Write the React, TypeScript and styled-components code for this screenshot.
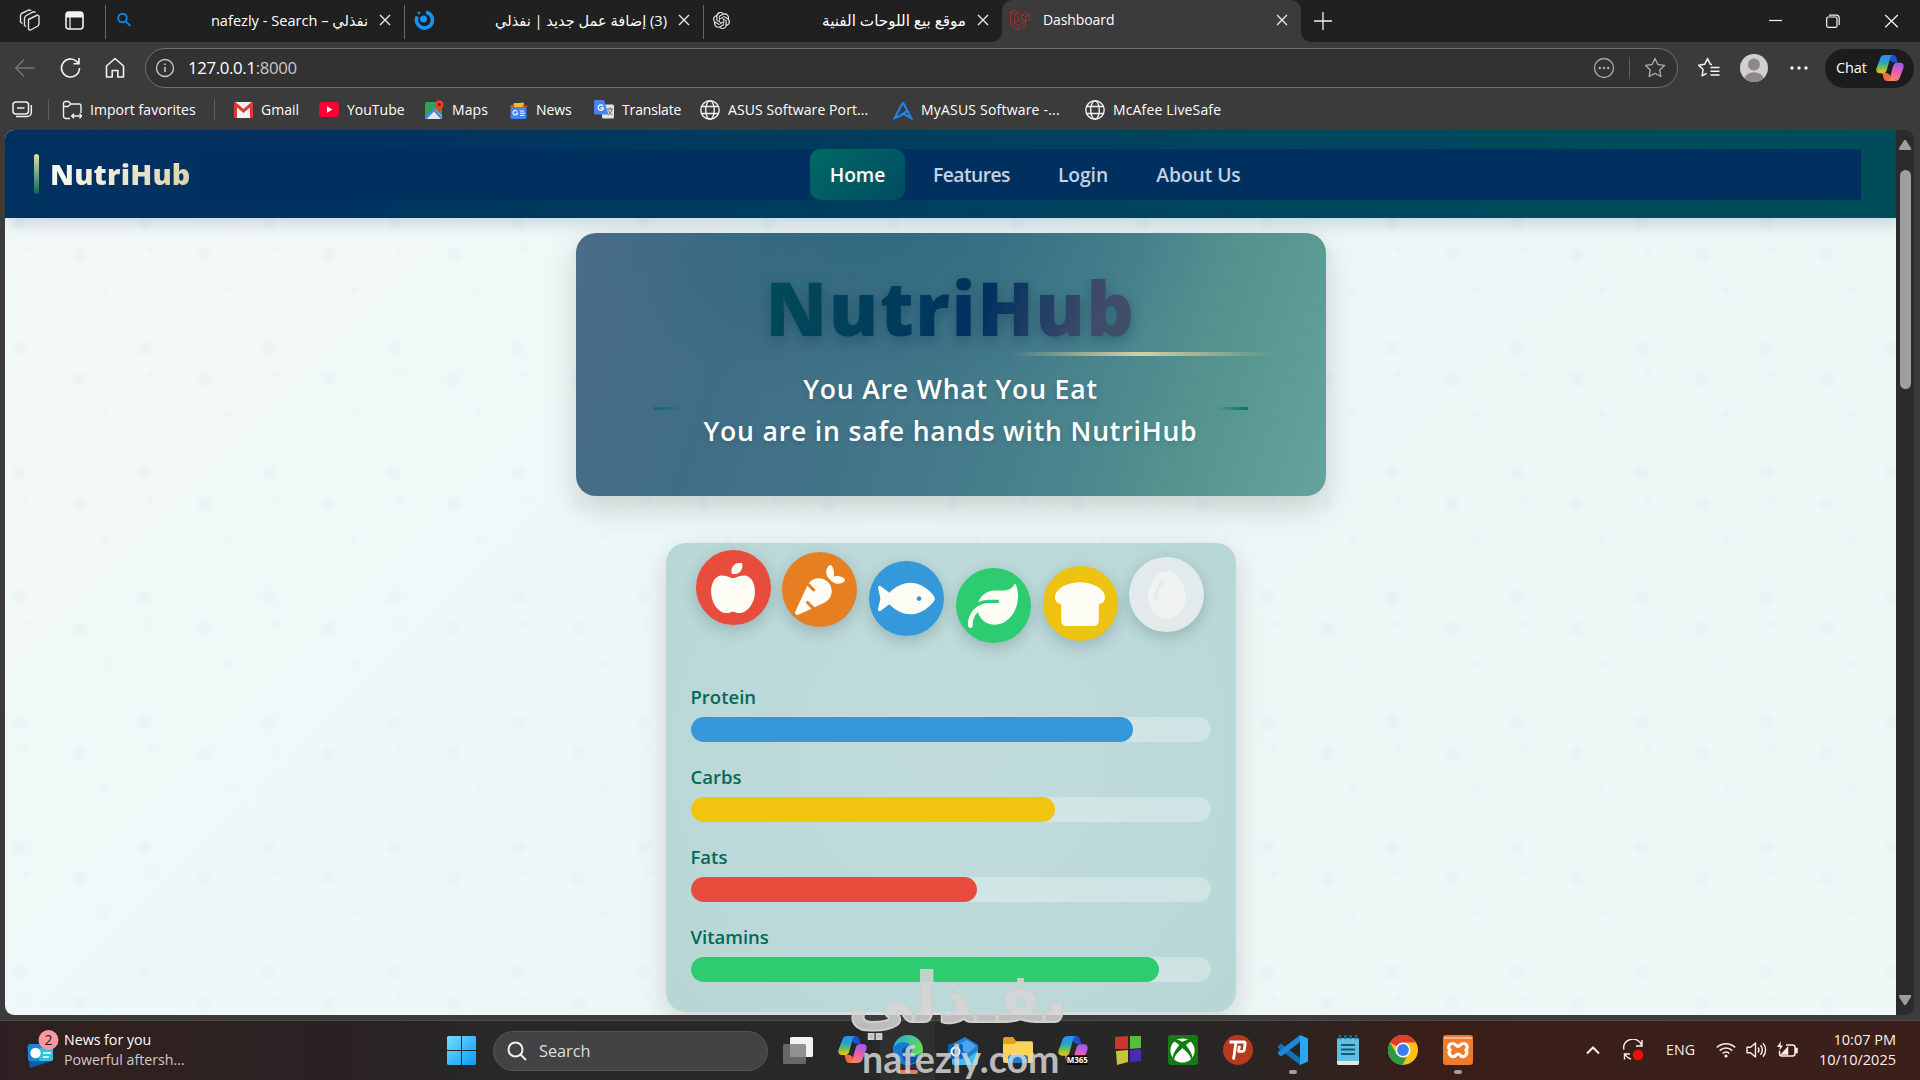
import React from 'react';
import styled, { createGlobalStyle } from 'styled-components';
import { FaAppleWhole, FaCarrot, FaLeaf, FaBreadSlice, FaEgg, FaXbox } from 'react-icons/fa6';
import { FaFish } from 'react-icons/fa';
import { SiOpenai, SiLaravel } from 'react-icons/si';

const Global = createGlobalStyle`
  * { box-sizing: border-box; }
  body { margin: 0; background: #3b3b3b; overflow: hidden; }
  svg { display: block; flex: none; }
`;

const Screen = styled.div`
  position: relative;
  width: 1920px;
  height: 1080px;
  display: flex;
  flex-direction: column;
  overflow: hidden;
  background: #3b3b3b;
  color: #fff;
  font-family: 'Open Sans', 'Noto Sans', 'DejaVu Sans', sans-serif;
  font-size: 14px;
  white-space: nowrap;
`;

/* ---------- browser: tab strip ---------- */
const TabStrip = styled.div`
  display: flex;
  height: 42px;
  flex: none;
`;
const StripLeft = styled.div`
  display: flex;
  align-items: center;
  width: 1002px;
  background: #202020;
  border-bottom-right-radius: 10px;
`;
const StripRight = styled.div`
  display: flex;
  flex: 1;
  align-items: center;
  padding: 0 21px 0 13px;
  background: #202020;
  border-bottom-left-radius: 10px;
`;
const TabActions = styled.div`
  display: flex;
  align-items: center;
  gap: 24px;
  width: 105px;
  padding: 0 0 2px 19px;
`;
const Tab = styled.div`
  display: flex;
  align-items: center;
  width: 299px;
  height: 34px;
  padding: 0 13px 4px 9px;
  border-left: 1px solid #666;
  margin-top: 2px;
`;
const ActiveWrap = styled.div`
  width: 299px;
  background: linear-gradient(#202020 50%, #3b3b3b 50%);
`;
const ActiveTab = styled.div`
  display: flex;
  align-items: center;
  height: 42px;
  padding: 0 13px 2px 8px;
  background: #3b3b3b;
  border-radius: 10px 10px 0 0;
`;
const TabTitle = styled.span<{ $left?: boolean; $ls?: number; $size?: number }>`
  flex: 1;
  margin: 0 11px 0 13px;
  text-align: ${(p) => (p.$left ? 'left' : 'right')};
  letter-spacing: ${(p) => p.$ls ?? 0}px;
  font-size: ${(p) => p.$size ?? 14}px;
  line-height: 20px;
  unicode-bidi: isolate;
`;
const WindowButtons = styled.div`
  display: flex;
  align-items: center;
  gap: 44px;
  margin-left: auto;
`;

/* ---------- browser: toolbar ---------- */
const Toolbar = styled.div`
  display: flex;
  align-items: center;
  height: 52px;
  flex: none;
  padding: 0 6px 0 14px;
`;
const NavButtons = styled.div`
  display: flex;
  gap: 23px;
  width: 131px;
`;
const AddressBar = styled.div`
  display: flex;
  align-items: center;
  width: 1533px;
  height: 40px;
  padding: 0 11px 0 9px;
  border: 1px solid #707070;
  border-radius: 20px;
  background: #323232;
`;
const Url = styled.span`
  flex: 1;
  margin-left: 13px;
  padding-bottom: 2px;
  font-size: 16.8px;
  letter-spacing: -0.35px;
  span { color: #c8c8c8; }
`;
const Divider = styled.i<{ $m: string; $h?: number }>`
  width: 1px;
  height: ${(p) => p.$h ?? 20}px;
  margin: ${(p) => p.$m};
  background: #5e5e5e;
`;
const ToolbarRight = styled.div`
  display: flex;
  flex: 1;
  align-items: center;
  justify-content: flex-end;
`;
const Chat = styled.div`
  display: flex;
  align-items: center;
  gap: 9px;
  width: 89px;
  height: 39px;
  margin-left: 17px;
  padding-left: 11px;
  border-radius: 20px;
  background: #1c1c1c;
  span { letter-spacing: -0.1px; font-size: 14.5px; padding-bottom: 2px; }
`;

/* ---------- browser: bookmarks ---------- */
const Bookmarks = styled.div`
  display: flex;
  align-items: center;
  height: 36px;
  flex: none;
  padding: 0 0 5px 12px;
`;
const Bookmark = styled.div<{ $w: number; $ls?: number }>`
  display: flex;
  align-items: center;
  gap: 8px;
  width: ${(p) => p.$w}px;
  letter-spacing: ${(p) => p.$ls ?? -0.05}px;
`;

/* ---------- page ---------- */
const Viewport = styled.div`
  display: flex;
  height: 885px;
  flex: none;
  margin: 0 6px 0 5px;
`;
const Page = styled.div`
  width: 1891px;
  overflow: hidden;
  border-radius: 9px 0 0 9px;
  background:
    radial-gradient(circle at 50% 50%, rgba(0, 90, 90, 0.022) 4px, transparent 9px) -48px 31px / 124.8px 124.8px,
    radial-gradient(circle at 50% 50%, rgba(0, 90, 90, 0.022) 4px, transparent 9px) 12px 62px / 124.8px 124.8px,
    radial-gradient(circle at 50% 50%, rgba(0, 90, 90, 0.018) 1px, transparent 5px) 37px 97px / 124.8px 124.8px,
    radial-gradient(circle at 50% 50%, rgba(0, 90, 90, 0.018) 1px, transparent 5px) -42px 57px / 124.8px 124.8px,
    linear-gradient(135deg, #f4f9f7, #eff8f8 35%, #eef6f6 65%, #f0f8f7);
`;
const Header = styled.header`
  display: flex;
  align-items: center;
  height: 88px;
  padding: 0 35px 0 29px;
  background: linear-gradient(135deg, #003060 0%, #003260 18%, #00405f 50%, #004a5c 80%, #004d5a 100%);
  box-shadow: 0 4px 18px rgba(0, 48, 96, 0.2);
`;
const Brand = styled.div`
  display: flex;
  align-items: center;
  gap: 11px;
  width: 166px;
  &::before {
    content: '';
    width: 5px;
    height: 40px;
    border-radius: 3px;
    background: linear-gradient(#e6d9ae, #5b9a85 60%, #00695c);
  }
  span {
    font-size: 28.8px;
    font-weight: 800;
    letter-spacing: 0.15px;
    line-height: 42px;
    background: linear-gradient(135deg, #fff, #d9cfa3);
    background-clip: text;
    -webkit-background-clip: text;
    color: transparent;
  }
`;
const Nav = styled.nav`
  display: flex;
  flex: 1;
  height: 51px;
  padding-left: 610px;
  background: #003060;
`;
const NavItem = styled.a<{ $w: number; $on?: boolean; $ls?: number }>`
  display: flex;
  align-items: center;
  justify-content: center;
  width: ${(p) => p.$w}px;
  height: 51px;
  border-radius: 10px;
  font-size: 19.3px;
  font-weight: 600;
  letter-spacing: ${(p) => p.$ls ?? -0.1}px;
  color: ${(p) => (p.$on ? '#fff' : '#c3d3e3')};
  background: ${(p) => (p.$on ? 'linear-gradient(135deg, #006a62, #004c62)' : 'none')};
  box-shadow: ${(p) => (p.$on ? '0 4px 12px rgba(0, 60, 90, 0.5)' : 'none')};
`;
const Main = styled.main`
  display: flex;
  flex-direction: column;
  align-items: center;
  padding-top: 15px;
`;
const Hero = styled.section`
  display: flex;
  flex-direction: column;
  align-items: center;
  width: 750px;
  height: 263px;
  padding-top: 33px;
  border-radius: 20px;
  background:
    radial-gradient(ellipse 320px 170px at 42% 0%, rgba(36, 98, 122, 0.55), transparent),
    linear-gradient(108deg, #4b6c86 0%, #406d86 22%, #437889 50%, #4a858d 68%, #58978f 85%, #64a49c 100%);
  box-shadow: 0 12px 32px rgba(0, 0, 0, 0.17);
`;
const HeroTitle = styled.h1`
  margin: 0;
  font-size: 74px;
  font-weight: 800;
  line-height: 84px;
  letter-spacing: 1.5px;
  background: linear-gradient(110deg, #004a58 5%, #00315f 58%, #3f4a69 86%, #3f5268);
  background-clip: text;
  -webkit-background-clip: text;
  color: transparent;
  filter: drop-shadow(0 4px 7px rgba(0, 40, 70, 0.35));
`;
const Underline = styled.div`
  width: 262px;
  height: 4px;
  margin: 2px 0 0 381px;
  background: linear-gradient(90deg, transparent, #d9cfa0 50%, transparent);
`;
const Slogan = styled.div`
  display: grid;
  grid-template-columns: 32px 1fr 32px;
  align-items: center;
  width: 594px;
  margin-top: 12px;
`;
const Dash = styled.i<{ $dir: string }>`
  height: 3px;
  margin-bottom: 3px;
  background: linear-gradient(to ${(p) => p.$dir}, #00766b, transparent);
`;
const SloganText = styled.p`
  margin: 0;
  text-align: center;
  font-size: 26.6px;
  font-weight: 600;
  line-height: 42px;
  letter-spacing: 0.8px;
  text-shadow: 0 2px 5px rgba(0, 0, 0, 0.14);
`;
const Card = styled.section`
  width: 570px;
  height: 469px;
  margin-top: 47px;
  padding: 0 25px;
  border-radius: 20px;
  background: radial-gradient(circle at 50% 45%, #c2dcdd, #bbd9d8 60%, #b7d6d4);
  box-shadow: 0 8px 28px rgba(0, 0, 0, 0.15);
`;
const Foods = styled.div`
  display: flex;
  justify-content: space-between;
  height: 148px;
  padding: 7px 6px 0 5px;
`;
const Food = styled.div<{ $bg: string; $fg?: string; $y: number; $size?: number }>`
  display: flex;
  align-items: center;
  justify-content: center;
  width: 75px;
  height: 75px;
  margin-top: ${(p) => p.$y}px;
  border-radius: 50%;
  background: ${(p) => p.$bg};
  color: ${(p) => p.$fg ?? '#fdfdf5'};
  font-size: ${(p) => p.$size ?? 50}px;
  box-shadow: 0 5px 15px rgba(0, 40, 40, 0.2);
`;
const Nutrient = styled.div`
  height: 80px;
`;
const NutrientName = styled.div`
  height: 26px;
  line-height: 12px;
  font-size: 18.5px;
  font-weight: 600;
  color: #00695c;
`;
const Track = styled.div`
  height: 25px;
  border-radius: 12.5px;
  background: rgba(255, 255, 255, 0.3);
`;
const Fill = styled.div<{ $c: string }>`
  height: 25px;
  border-radius: 12.5px;
  background: ${(p) => p.$c};
`;
const Scrollbar = styled.div`
  display: flex;
  flex-direction: column;
  align-items: center;
  justify-content: space-between;
  width: 18px;
  padding: 10px 0 10px;
  border-radius: 0 9px 9px 0;
  background: #2b2b2b;
`;
const Thumb = styled.div`
  width: 11px;
  height: 219px;
  margin: 24px 0 auto;
  border-radius: 6px;
  background: #9e9e9e;
`;
const Arrow = styled.i<{ $down?: boolean }>`
  width: 13px;
  height: 10px;
  margin-bottom: ${(p) => (p.$down ? 0 : -4)}px;
  background: #9e9e9e;
  clip-path: ${(p) =>
    p.$down ? 'polygon(0 10%, 8% 0, 92% 0, 100% 10%, 56% 100%, 44% 100%)' : 'polygon(0 90%, 8% 100%, 92% 100%, 100% 90%, 56% 0, 44% 0)'};
`;

/* ---------- taskbar ---------- */
const Taskbar = styled.div`
  display: flex;
  align-items: center;
  height: 60px;
  margin-top: 5px;
  flex: none;
  border-top: 1px solid #514c4b;
  background: linear-gradient(90deg, #2e2022 0, #30211f 6%, #2a2124 18%, #282829 26%, #272727 60%, #2c2422 67%, #3a1e18 75%, #3b1f1a 100%);
`;
const News = styled.div`
  display: flex;
  align-items: center;
  gap: 3px;
  width: 447px;
  padding: 0 0 2px 25px;
`;
const NewsText = styled.div`
  font-size: 14.2px;
  line-height: 20px;
  div + div { color: #cfc8c8; }
`;
const SearchBox = styled.div`
  display: flex;
  align-items: center;
  gap: 12px;
  width: 275px;
  height: 40px;
  margin: 0 2px 0 17px;
  padding-left: 13px;
  border: 1px solid #555557;
  border-radius: 20px;
  background: #434345;
  color: #dedede;
  font-size: 16.3px;
`;
const Apps = styled.div`
  display: flex;
  height: 59px;
`;
const TaskApp = styled.div<{ $mark?: string; $mw?: number; $open?: boolean }>`
  display: flex;
  flex-direction: column;
  align-items: center;
  width: 55px;
  padding-top: 14px;
  background: ${(p) => (p.$open ? 'rgba(255, 255, 255, 0.04)' : 'none')};
  &::after {
    content: '';
    width: ${(p) => p.$mw ?? 8}px;
    height: 4px;
    margin-top: 5px;
    border-radius: 2px;
    background: ${(p) => p.$mark ?? 'transparent'};
  }
`;
const XboxTile = styled.div`
  display: flex;
  align-items: center;
  justify-content: center;
  width: 30px;
  height: 30px;
  border-radius: 3px;
  background: #147a14;
  font-size: 25px;
`;
const Tray = styled.div`
  display: flex;
  flex: 1;
  align-items: center;
  justify-content: flex-end;
  padding: 0 24px 2px 0;
  color: #fdeeea;
`;
const Lang = styled.span`
  margin: 0 21px 0 13px;
  font-size: 14.2px;
`;
const Status = styled.div`
  display: flex;
  gap: 10px;
  margin-right: 20px;
`;
const Clock = styled.div`
  width: 78px;
  text-align: right;
  font-size: 14.5px;
  line-height: 20px;
`;

/* ---------- watermark over everything ---------- */
const Watermark = styled.div`
  position: absolute;
  left: 852px;
  top: 958px;
  width: 216px;
  color: rgba(214, 214, 214, 0.85);
`;
const MarkArabic = styled.div`
  height: 73px;
  font: bold 68px/82px 'DejaVu Sans', sans-serif;
  transform: scaleX(0.95);
  transform-origin: right;
  -webkit-text-stroke: 2px rgb(206, 208, 208);
`;
const MarkLatin = styled.div`
  padding-left: 10px;
  font: 700 37.5px/56px 'Lato', sans-serif;
`;

const Close = () => (
  <svg width="12" height="12" viewBox="0 0 12 12" stroke="#e8e8e8" strokeWidth="1.4"><path d="M1 1l10 10M11 1L1 11" /></svg>
);
const Globe = () => (
  <svg width="20" height="20" viewBox="0 0 20 20" fill="none" stroke="#f0f0f0" strokeWidth="1.4">
    <circle cx="10" cy="10" r="9.2" /><ellipse cx="10" cy="10" rx="4.3" ry="9.2" /><path d="M1.7 6.5h16.6M1.7 13.5h16.6" />
  </svg>
);
const Copilot = ({ size = 28, m365 = false }: { size?: number; m365?: boolean }) => {
  const id = 'cp' + size + (m365 ? 'm' : '');
  return (
    <svg width={size} height={size} viewBox="0 0 28 28">
      <defs>
        <linearGradient id={id + 'a'} x1="0" y1="0" x2="0" y2="1">
          <stop offset="0" stopColor="#2a8df0" /><stop offset=".4" stopColor="#27a5c8" /><stop offset=".7" stopColor="#79c04a" /><stop offset="1" stopColor="#f3c41a" />
        </linearGradient>
        <linearGradient id={id + 'b'} x1=".3" y1="0" x2=".1" y2="1">
          <stop offset="0" stopColor="#a45af0" /><stop offset=".5" stopColor="#ee5fa8" /><stop offset="1" stopColor="#ff8a52" />
        </linearGradient>
      </defs>
      <path d="M13.500 1H17c2 0 3 1.200 3.500 3l1.300 4.500H17l-3-2z" fill="#1b4fd6" />
      <path d="M14.500 27H11c-2 0-3-1.200-3.500-3L6.200 19H11l3 2z" fill="#f2693c" />
      <path d="M9 1h7.500c-1.400.5-2 1.800-2.500 3.500L10.800 16c-.6 2-1.500 3.300-3.500 3.300H4c-3.200 0-4.300-2.200-3.400-5.200L4 5C4.800 2.500 6 1 9 1z" fill={`url(#${id}a)`} />
      <path d="M19 27h-7.500c1.400-.5 2-1.800 2.500-3.500L17.200 12c.6-2 1.500-3.300 3.500-3.300H24c3.200 0 4.300 2.200 3.400 5.200L24 23c-.8 2.500-2 4-5 4z" fill={`url(#${id}b)`} />
      {m365 && <rect x="8" y="19" width="20" height="9" rx="1.500" fill="#080808" />}
      {m365 && <text x="18" y="26.300" fill="#fff" fontSize="7.500" fontWeight="700" textAnchor="middle" fontFamily="Open Sans">M365</text>}
    </svg>
  );
};

const foods = [
  { Icon: FaAppleWhole, bg: '#e74c3c', y: 0 },
  { Icon: FaCarrot, bg: '#e67e22', y: 2 },
  { Icon: FaFish, bg: '#3498db', y: 11, size: 57 },
  { Icon: FaLeaf, bg: '#2ecc71', y: 18 },
  { Icon: FaBreadSlice, bg: '#edc211', y: 16 },
  { Icon: FaEgg, bg: '#e3eaec', fg: '#f0f3ef', y: 7 },
];
const nutrients = [
  { name: 'Protein', pct: 85, c: '#3498db' },
  { name: 'Carbs', pct: 70, c: '#f1c40f' },
  { name: 'Fats', pct: 55, c: '#e74c3c' },
  { name: 'Vitamins', pct: 90, c: '#2ecc71' },
];

const Browser = () => (
  <>
    <TabStrip>
      <StripLeft>
        <TabActions>
          <svg width="22" height="22" viewBox="0 0 22 22" fill="none" stroke="#e0e0e0" strokeWidth="1.400" strokeLinejoin="round">
            <path d="M9.500 10.500l8-4a1.500 1.500 0 012.500 1.300v7.400l-1 1.800-7.500 4a1.500 1.500 0 01-2-1.300z" />
            <path d="M7 17.500l-1.500-1V8.800l1-1.800 8-4.300 2 .8M3.500 14.500L1.500 13V6.300l1-1.800 7.500-3.700 2.300.9" />
          </svg>
          <svg width="19" height="19" viewBox="0 0 19 19"><rect x="1" y="1" width="17" height="17" rx="3" fill="none" stroke="#f2f2f2" strokeWidth="1.600" /><path d="M1 6.500V4a3 3 0 013-3h11a3 3 0 013 3v2.500z" fill="#f2f2f2" /><path d="M5 6v12" stroke="#f2f2f2" strokeWidth="1.200" /></svg>
        </TabActions>
        <Tab>
          <svg width="18" height="18" viewBox="0 0 18 18" fill="none" stroke="#1585e0" strokeWidth="1.900"><circle cx="7.500" cy="7" r="4.300" /><path d="M10.500 10.200l5 5" /></svg>
          <TabTitle $size={14.6}>nafezly - Search – نفذلي</TabTitle>
          <Close />
        </Tab>
        <Tab>
          <svg width="20" height="20" viewBox="0 0 20 20"><path d="M3.300 6.500A8 8 0 1012 2.200" fill="none" stroke="#1595f3" strokeWidth="3.600" /><circle cx="9.500" cy="9" r="3.500" fill="#1595f3" /><circle cx="5" cy="3" r="1.300" fill="#1595f3" /></svg>
          <TabTitle dir="rtl" $size={14.6}>(3) إضافة عمل جديد | نفذلي</TabTitle>
          <Close />
        </Tab>
        <Tab>
          <SiOpenai size={17} color="#f0f0f0" />
          <TabTitle dir="rtl" $size={15.2}>موقع بيع اللوحات الفنية</TabTitle>
          <Close />
        </Tab>
      </StripLeft>
      <ActiveWrap>
        <ActiveTab>
          <SiLaravel size={20} color="#c22f2b" />
          <TabTitle $left $ls={-0.1}>Dashboard</TabTitle>
          <Close />
        </ActiveTab>
      </ActiveWrap>
      <StripRight>
        <svg width="18" height="18" viewBox="0 0 18 18" stroke="#f0f0f0" strokeWidth="1.300"><path d="M9 0v18M0 9h18" /></svg>
        <WindowButtons>
          <svg width="14" height="14" viewBox="0 0 14 14" stroke="#f5f5f5" strokeWidth="1.200"><path d="M1 6.500h13" /></svg>
          <svg width="14" height="14" viewBox="0 0 14 14" fill="none" stroke="#f5f5f5" strokeWidth="1.200"><rect x=".7" y="3" width="10.300" height="10.300" rx="1.500" /><path d="M3 1.200h7.500a2.700 2.700 0 012.700 2.700V11" /></svg>
          <svg width="15" height="14" viewBox="0 0 14 14" stroke="#f5f5f5" strokeWidth="1.200"><path d="M.7 1l12.600 12.300M13.300 1L.7 13.300" /></svg>
        </WindowButtons>
      </StripRight>
    </TabStrip>

    <Toolbar>
      <NavButtons>
        <svg width="22" height="22" viewBox="0 0 22 22" fill="none" stroke="#777" strokeWidth="1.400"><path d="M20.500 11H2M10 2.500L1.800 11l8.200 8.500" /></svg>
        <svg width="22" height="22" viewBox="0 0 22 22" fill="none" stroke="#f2f2f2" strokeWidth="1.600"><path d="M20.500 11a9 9 0 11-3-6.700L20 6.500M20 1v5.700h-5.500" /></svg>
        <svg width="22" height="22" viewBox="0 0 22 22" fill="none" stroke="#f2f2f2" strokeWidth="1.600" strokeLinejoin="round"><path d="M2.500 9L11 1.500 19.500 9v11h-5.700v-6.500H8.200V20H2.500z" /></svg>
      </NavButtons>
      <AddressBar>
        <svg width="20" height="20" viewBox="0 0 20 20" fill="none" stroke="#c9c9c9" strokeWidth="1.300"><circle cx="10" cy="10" r="8.500" /><path d="M10 9v5M10 5.500v1.500" strokeWidth="1.600" /></svg>
        <Url>127.0.0.1<span>:8000</span></Url>
        <svg width="22" height="22" viewBox="0 0 22 22" fill="none" stroke="#a8a8a8" strokeWidth="1.300"><circle cx="11" cy="11" r="9.500" /><g fill="#b5b5b5" stroke="none"><circle cx="6.800" cy="11" r="1.200" /><circle cx="11" cy="11" r="1.200" /><circle cx="15.200" cy="11" r="1.200" /></g></svg>
        <Divider $m="0 14px 0 14px" $h={22} />
        <svg width="22" height="22" viewBox="0 0 22 22" fill="none" stroke="#a8a8a8" strokeWidth="1.400" strokeLinejoin="round"><path d="M11 1.500l2.900 6 6.600.9-4.800 4.600 1.200 6.500L11 16.400l-5.900 3.100 1.200-6.500L1.500 8.400l6.600-.9z" /></svg>
      </AddressBar>
      <ToolbarRight>
        <svg width="22" height="22" viewBox="0 0 22 22" fill="none" stroke="#f5f5f5" strokeWidth="1.500" strokeLinejoin="round"><path d="M14 7.500l-1.600-.2L9.500 1.500 6.700 7.300l-6 .9 4.400 4.300-1 6.300 4.500-2.400M12.500 10.500h9M12.500 14.300h9M12.500 18h9" /></svg>
        <svg width="68" height="30" viewBox="0 0 68 30"><circle cx="34" cy="15" r="14" fill="#d2cfcc" /><circle cx="34" cy="11.500" r="6" fill="#8c8a88" /><path d="M24.500 25.300a9.600 7 0 0119 0A14 14 0 0134 29a14 14 0 01-9.500-3.700z" fill="#8c8a88" /></svg>
        <svg width="20" height="20" viewBox="0 0 20 20" fill="#f5f5f5"><circle cx="4" cy="10" r="1.700" /><circle cx="11" cy="10" r="1.700" /><circle cx="18" cy="10" r="1.700" /></svg>
        <Chat><span>Chat</span><Copilot size={28} /></Chat>
      </ToolbarRight>
    </Toolbar>

    <Bookmarks>
      <svg width="21" height="17" viewBox="0 0 21 17" fill="none" stroke="#efefef" strokeWidth="1.500"><rect x="1" y="1" width="15.500" height="12" rx="3" /><path d="M5 7h7.500M19.300 4v7.500a4 4 0 01-4 4H4" /></svg>
      <Divider $m="0 13px 0 15px" $h={21} />
      <Bookmark $w={153} $ls={0.05}>
        <svg width="20" height="20" viewBox="0 0 20 20" fill="none" stroke="#efefef" strokeWidth="1.400"><path d="M8 18.500H4a2.500 2.500 0 01-2.500-2.500V3.500A2 2 0 013.500 1.500h3L9 4h8a2 2 0 012 2v7M1.500 6.500H6L9 4M10 16h9.500M12 13.700L9.700 16l2.300 2.300M17.500 13.700l2.300 2.300-2.300 2.300" /></svg>
        Import favorites
      </Bookmark>
      <Divider $m="0 19px 0 -1px" $h={21} />
      <Bookmark $w={85} $ls={0}>
        <svg width="19" height="16" viewBox="0 0 19 16"><rect width="19" height="16" rx="1.500" fill="#f1f1f1" /><path d="M1.500 16V2l8 7 8-7v14" fill="none" stroke="#d93c35" strokeWidth="3" /></svg>
        Gmail
      </Bookmark>
      <Bookmark $w={106} $ls={0}>
        <svg width="20" height="15" viewBox="0 0 20 15"><rect width="20" height="15" rx="3.500" fill="#ff0033" /><path d="M8 4.300v6.400l5.300-3.200z" fill="#fff" /></svg>
        YouTube
      </Bookmark>
      <Bookmark $w={84} $ls={0.1}>
        <svg width="19" height="19" viewBox="0 0 19 19"><rect y="2" width="17" height="17" rx="2" fill="#34a15a" /><path d="M0 19L10 9l7 7v3z" fill="#e8e8e8" /><path d="M0 19l9-9 8 8.500" fill="none" stroke="#4285f4" strokeWidth="2.400" /><path d="M14 13c-.5-3-4-5-4-8.500a4.200 4.200 0 018.500 0c0 3.500-4 5.500-4.500 8.500z" fill="#e5402f" /><circle cx="14.200" cy="4.500" r="1.500" fill="#7d1d16" /></svg>
        Maps
      </Bookmark>
      <Bookmark $w={85}>
        <svg width="19" height="18" viewBox="0 0 19 18"><path d="M2 4l12-3 2 6H2z" fill="#34a15a" /><path d="M5 2h10l-1 6H4z" fill="#f4bd1c" /><path d="M0 5l5-1 1 5z" fill="#ea4335" /><path d="M19 5l-5-1-1 5z" fill="#ea4335" /><rect x="1.500" y="6" width="16" height="12" rx="1.500" fill="#4284f0" /><path d="M8.300 10.500a2.300 2.300 0 10.300 1.700H6.800M11 10h4M11 12.200h5M11 14.500h4" stroke="#fff" strokeWidth="1.100" fill="none" /></svg>
        News
      </Bookmark>
      <Bookmark $w={106} $ls={-0.15}>
        <svg width="20" height="19" viewBox="0 0 20 19"><rect x="8" y="4.500" width="12" height="14" rx="1.500" fill="#dfe3e8" /><path d="M1.500 0H10l4.500 14.500H1.500A1.500 1.500 0 010 13V1.500A1.500 1.500 0 011.500 0z" fill="#4284f0" /><path d="M9 6a2.700 2.700 0 10.500 1.800H6.300" stroke="#fff" strokeWidth="1.300" fill="none" /><path d="M13 9h6M16 7.500V9M18 9c-.5 3-2 5-4 6M14.500 10.500c1 2.500 2 3.500 4 4.500" stroke="#5d6b7a" fill="none" /></svg>
        Translate
      </Bookmark>
      <Bookmark $w={193} $ls={0.1}><Globe />ASUS Software Port...</Bookmark>
      <Bookmark $w={192} $ls={0.2}>
        <svg width="20" height="20" viewBox="0 0 21 20" fill="none" stroke="#1f86f2" strokeWidth="2.200"><path d="M10.500 2L1.800 18.500 7 16.500l8-5.500M10.500 2l8.500 16.500-8-4.500" /></svg>
        MyASUS Software -...
      </Bookmark>
      <Bookmark $w={160} $ls={0.15}><Globe />McAfee LiveSafe</Bookmark>
    </Bookmarks>
  </>
);

const Site = () => (
  <Viewport>
    <Page>
      <Header>
        <Brand><span>NutriHub</span></Brand>
        <Nav>
          <NavItem $w={95} $on>Home</NavItem>
          <NavItem $w={133} $ls={-0.55}>Features</NavItem>
          <NavItem $w={90}>Login</NavItem>
          <NavItem $w={141}>About Us</NavItem>
        </Nav>
      </Header>
      <Main>
        <Hero>
          <HeroTitle>NutriHub</HeroTitle>
          <Underline />
          <Slogan>
            <Dash $dir="right" />
            <SloganText>You Are What You Eat<br />You are in safe hands with NutriHub</SloganText>
            <Dash $dir="left" />
          </Slogan>
        </Hero>
        <Card>
          <Foods>
            {foods.map(({ Icon, bg, fg, y, size }) => <Food key={bg} $bg={bg} $fg={fg} $y={y} $size={size}><Icon /></Food>)}
          </Foods>
          {nutrients.map((n) => (
            <Nutrient key={n.name}>
              <NutrientName>{n.name}</NutrientName>
              <Track><Fill $c={n.c} style={{ width: `${n.pct}%` }} /></Track>
            </Nutrient>
          ))}
        </Card>
      </Main>
    </Page>
    <Scrollbar><Arrow /><Thumb /><Arrow $down /></Scrollbar>
  </Viewport>
);

const Desktop = () => (
  <Taskbar>
    <News>
      <svg width="36" height="40" viewBox="0 0 36 40">
        <path d="M2 16l22-3 3 18-22 7z" fill="#0c5fa8" /><rect x="3" y="14" width="25" height="17" rx="2" fill="#1a86d8" /><rect x="14" y="18" width="14" height="13" rx="2" fill="#2fc3dc" /><circle cx="10.500" cy="23" r="5.200" fill="#fff" /><path d="M18 23h8M18 27h6" stroke="#fff" strokeWidth="1.600" />
        <circle cx="23.500" cy="10" r="10" fill="#fb96a4" /><text x="23.500" y="15" textAnchor="middle" fontSize="14" fill="#301418" fontFamily="Open Sans">2</text>
      </svg>
      <NewsText><div>News for you</div><div>Powerful aftersh...</div></NewsText>
    </News>
    <svg width="29" height="29" viewBox="0 0 29 29">
      <defs><linearGradient id="win" x1="0" y1="0" x2="1" y2="1"><stop offset="0" stopColor="#74dcff" /><stop offset="1" stopColor="#0a9bf7" /></linearGradient></defs>
      <path d="M1 0h13v14H0V1zM15 0h13l1 1v13H15zM0 15h14v14H1l-1-1zM15 15h14v13l-1 1H15z" fill="url(#win)" />
    </svg>
    <SearchBox>
      <svg width="20" height="20" viewBox="0 0 20 20" fill="none" stroke="#f0f0f0" strokeWidth="2"><circle cx="8.500" cy="8.500" r="7" /><path d="M13.500 13.500l5.500 5.500" /></svg>
      Search
    </SearchBox>
    <Apps>
      <TaskApp><svg width="30" height="30" viewBox="0 0 30 30"><rect x="7" y="2" width="23" height="20" rx="1.500" fill="#f2f2f2" /><rect y="9" width="23" height="20" rx="1.500" fill="#777" fillOpacity=".8" /></svg></TaskApp>
      <TaskApp><Copilot size={29} /></TaskApp>
      <TaskApp $mark="#f0766b" $mw={20} $open>
        <svg width="30" height="30" viewBox="0 0 30 30">
          <defs><linearGradient id="ed" x1="0" y1="0" x2="1" y2=".4"><stop offset="0" stopColor="#26a9e0" /><stop offset="1" stopColor="#5fdc55" /></linearGradient></defs>
          <circle cx="15" cy="15" r="15" fill="url(#ed)" /><path d="M0 14C2 8 9 6 14 8c4 1.500 5 5 4 8-1 2 0 4 4 4 3 0 5-.5 7-2C27 26 21 30 15 30 6 30-.5 23 0 14z" fill="#1678d0" /><path d="M9 19c-1-6 4-9 8-7 2 1 2 3 1 5-1 2.500.5 5 5 5 2 0 4-.5 5-1.500C25 27 20 29 16 28c-4-1-6.500-4.500-7-9z" fill="#0c4f9e" />
        </svg>
      </TaskApp>
      <TaskApp>
        <svg width="30" height="30" viewBox="0 0 30 30"><path d="M4 9L17 2l13 8v18a2 2 0 01-2 2H6a2 2 0 01-2-2z" fill="#1f80d8" /><path d="M10 10l9-5 9 6-9 8z" fill="#4aa6ea" /><path d="M4 17l13 8 13-9v12a2 2 0 01-2 2H6a2 2 0 01-2-2z" fill="#3dbdf2" /><rect y="9" width="15" height="15" rx="2" fill="#0f62b8" /><circle cx="7.500" cy="16.500" r="4" fill="none" stroke="#fff" strokeWidth="2" /></svg>
      </TaskApp>
      <TaskApp>
        <svg width="30" height="30" viewBox="0 0 30 30"><path d="M0 4a2 2 0 012-2h8l3 4h15a2 2 0 012 2v6H0z" fill="#e2a012" /><path d="M0 9h11l3-2h14a2 2 0 012 2v17a2 2 0 01-2 2H2a2 2 0 01-2-2z" fill="#ffd35a" /><path d="M5 28v-5a3 3 0 013-3h14a3 3 0 013 3v5z" fill="#1a7fd4" /></svg>
      </TaskApp>
      <TaskApp><Copilot size={30} m365 /></TaskApp>
      <TaskApp>
        <svg width="30" height="30" viewBox="0 0 30 30"><path d="M2 2l13-1v13H2z" fill="#c9362c" /><path d="M17 1h11v12l-11 1z" fill="#5cbb3c" /><path d="M3 16l12-1v12L4 30z" fill="#c8c43a" /><path d="M17 15l11-1v12l-11 1z" fill="#4b2bb0" /></svg>
      </TaskApp>
      <TaskApp><XboxTile><FaXbox /></XboxTile></TaskApp>
      <TaskApp>
        <svg width="30" height="30" viewBox="0 0 30 30"><circle cx="15" cy="15" r="15" fill="#b83a1e" /><path d="M6.500 7h6.500L10.500 24.500M12.500 7h8.500a1.200 1.200 0 011.200 1.400l-1 6.600a1.500 1.500 0 01-1.500 1.300H15.500l1-5.500" fill="none" stroke="#fff" strokeWidth="2.800" strokeLinejoin="round" /></svg>
      </TaskApp>
      <TaskApp $mark="#a79a97">
        <svg width="30" height="30" viewBox="0 0 30 30"><path d="M0 11l3-2.500L22 23v7L0 13z" fill="#1272b8" /><path d="M0 19l3 2.500L22 7V0L0 17z" fill="#1c8ad6" /><path d="M22 0l8 3.500v23L22 30z" fill="#2aa6f2" /></svg>
      </TaskApp>
      <TaskApp>
        <svg width="24" height="30" viewBox="0 0 24 30"><rect x="1" y="3" width="22" height="25" rx="1.500" fill="#5fbfdc" /><path d="M1 26h22v2.500a1.500 1.500 0 01-1.500 1.500h-19A1.500 1.500 0 011 28.500z" fill="#e9e4dc" /><path d="M5 10h14M5 14.500h14M5 19h14" stroke="#125a78" strokeWidth="1.800" /><path d="M4 0v4M9.300 0v4M14.600 0v4M20 0v4" stroke="#1b6d8c" strokeWidth="2.400" /></svg>
      </TaskApp>
      <TaskApp>
        <svg width="30" height="30" viewBox="0 0 30 30"><circle cx="15" cy="15" r="15" fill="#fbc116" /><path d="M15 15L2 7.500A15 15 0 0128 7.500H15z" fill="#e33b2e" /><path d="M14.500 30A15 15 0 012 7.500l6.500 11.300L15 22.500l3.500-.5z" fill="#2a9a48" /><circle cx="15" cy="15" r="7.500" fill="#fff" /><circle cx="15" cy="15" r="5.900" fill="#3a7df0" /></svg>
      </TaskApp>
      <TaskApp $mark="#a79a97">
        <svg width="30" height="30" viewBox="0 0 30 30"><rect width="30" height="30" rx="3" fill="#ee7a2b" /><path d="M1 2h28v2H1z" fill="#f8b98a" /><path d="M9.500 8.500c3 0 3.500 3 5.500 3s2.500-3 5.500-3c3.500 0 5 4 2.500 6.500 2.500 3-1 7.500-4 6.500-2-.6-2-2.500-4-2.500s-2 1.900-4 2.500c-3 1-6.500-3.500-4-6.500-2.500-2.500-1-6.500 2.500-6.500z" fill="none" stroke="#fff" strokeWidth="3.200" /></svg>
      </TaskApp>
    </Apps>
    <Tray>
      <svg width="14" height="10" viewBox="0 0 14 10" fill="none" stroke="currentColor" strokeWidth="2"><path d="M1 8.500l6-6 6 6" /></svg>
      <svg width="53" height="22" viewBox="0 0 53 22" fill="none" stroke="currentColor" strokeWidth="1.400"><path d="M24 10.500a9 8 0 0117.500-4.500M42 1v6h-6M24.500 20.500v-5.500h5.500M25 15.500a10 9 0 006 4.500" /><circle cx="38" cy="16" r="5.200" fill="#ff0a00" stroke="none" /></svg>
      <Lang>ENG</Lang>
      <Status>
        <svg width="20" height="18" viewBox="0 0 20 18" fill="none" stroke="currentColor" strokeWidth="1.600"><path d="M.8 6.500a13 13 0 0118.400 0M3.700 9.600a9 9 0 0112.600 0M6.600 12.500a5 5 0 016.800 0" /><circle cx="10" cy="15" r="1.600" fill="currentColor" stroke="none" /></svg>
        <svg width="21" height="18" viewBox="0 0 21 18" fill="none" stroke="currentColor" strokeWidth="1.400" strokeLinejoin="round"><path d="M1 6.300h3.500L9.500 2v14l-5-4.300H1zM12 6.500a4 4 0 010 5M14.500 4.300a7 7 0 010 9.400M17 2.300a10 10 0 010 13.400" /></svg>
        <svg width="21" height="18" viewBox="0 0 21 18" fill="none" stroke="currentColor" strokeWidth="1.500"><path d="M9 4h6.500a2.500 2.500 0 012.500 2.500v6a2.500 2.500 0 01-2.500 2.500H5a2.500 2.500 0 01-2.500-2.500V10M18.500 7.500v4h1.500v-4z" /><path d="M5 13l5.500-6v6z" fill="currentColor" /><path d="M4 0L0 6h3L2 10l4-5.500H3.500z" fill="currentColor" stroke="none" /></svg>
      </Status>
      <Clock>10:07 PM<br />10/10/2025</Clock>
    </Tray>
  </Taskbar>
);

export default function App() {
  return (
    <Screen>
      <Global />
      <Browser />
      <Site />
      <Desktop />
      <Watermark>
        <MarkArabic dir="rtl">نفـذلي</MarkArabic>
        <MarkLatin>nafezly.com</MarkLatin>
      </Watermark>
    </Screen>
  );
}
